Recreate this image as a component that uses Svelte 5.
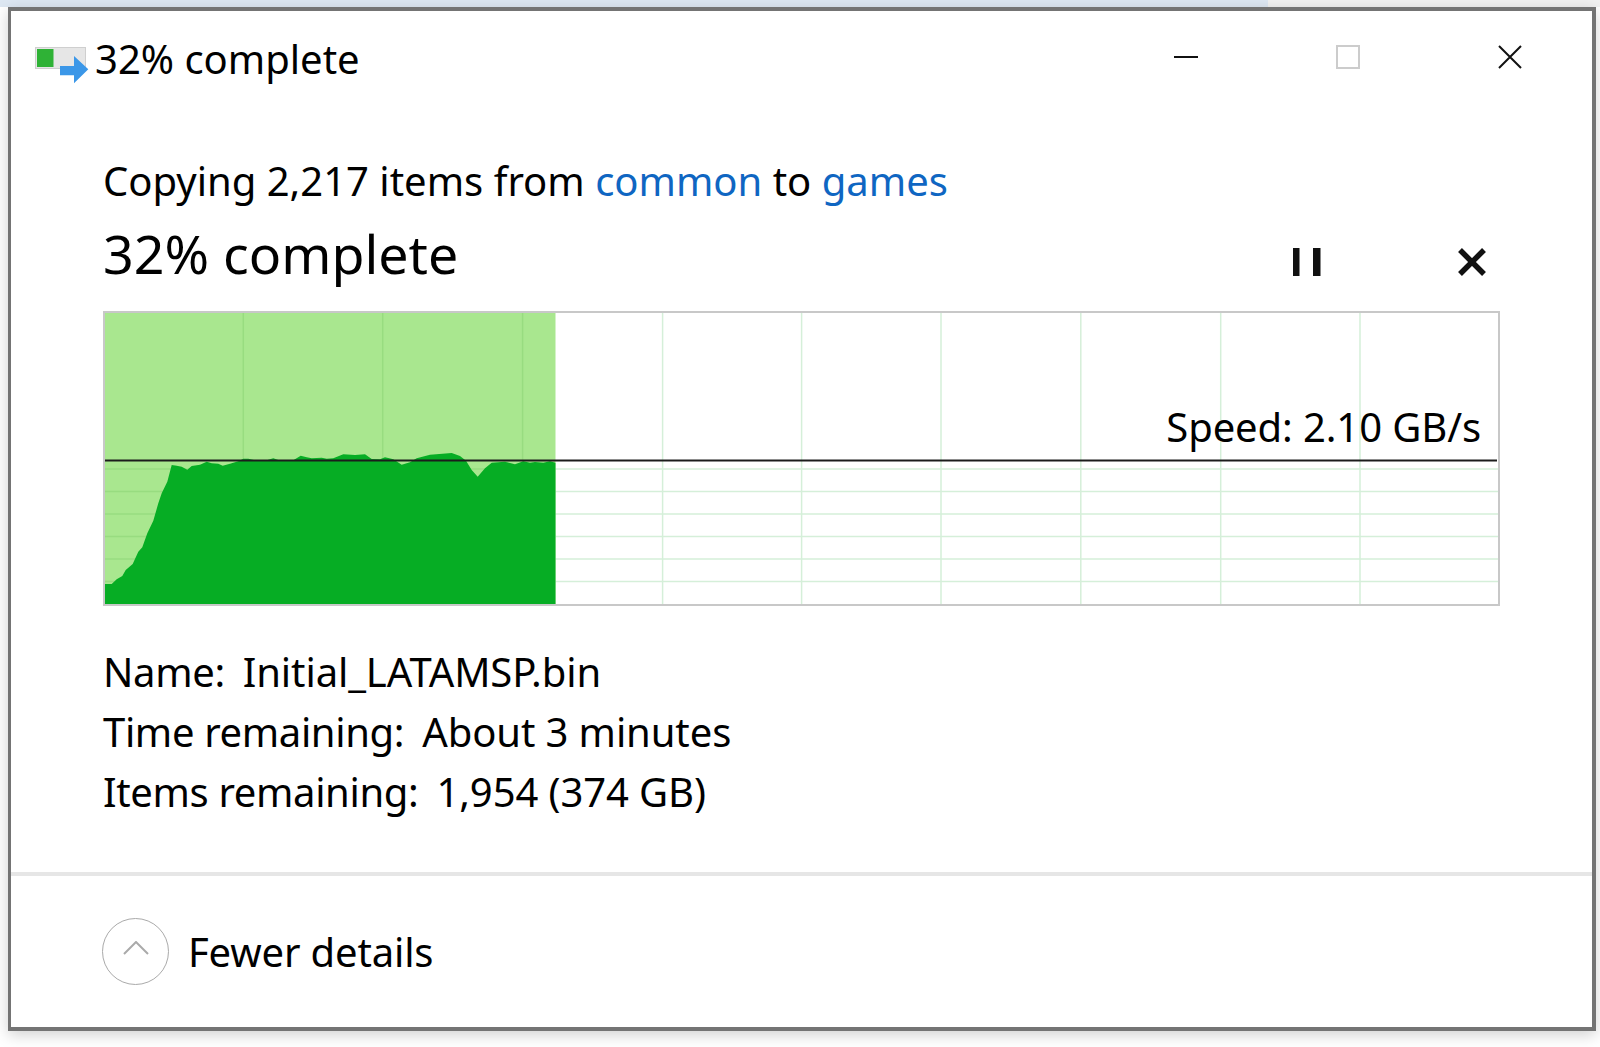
<script>
	const title = '32% complete';
	const gridX = [243.3, 382.7, 522.6, 662.6, 801.6, 941, 1080.8, 1220.7, 1360];
	const gridY = [469, 491.5, 514, 536.5, 559, 581.5];
	const left = 105;
	const top = 313;
	const doneX = 555.5;
	const bottomY = 604;

	// speed samples, page coordinates
	const samples = [
		[105, 584], [111.7, 584], [116.7, 579.3], [122.3, 576], [125.7, 570], [132.7, 564], [138.3, 551.7],
		[142.3, 547.3], [147.3, 533.3], [153.3, 520.7], [158.3, 503.3], [161.7, 493.3], [167.3, 481.7],
		[171.7, 465], [176.7, 465.7], [181.7, 466.7], [187.3, 469.7], [191.7, 466], [200, 464.7], [206.7, 461.7],
		[211.7, 463.3], [218.3, 463.7], [222.7, 465.7], [230, 463.7], [238.3, 461.3], [243.3, 458.7], [248.3, 458.7],
		[255, 460.3], [266.7, 460.3], [273.3, 458.3], [278.3, 460], [293.3, 460.3], [300.7, 455.7], [306.7, 457.3],
		[311.7, 458.3], [321.7, 457.7], [326.7, 458.7], [333.3, 458.3], [343.3, 454.3], [355, 455], [365, 454.3],
		[371.7, 459], [380, 459.3], [385, 457.3], [393.3, 459.3], [401.7, 464.7], [410, 462.3], [416.7, 458.3],
		[430, 454.7], [451.7, 453], [460, 456], [466, 460.7], [471.7, 470], [477.7, 476.7], [485, 468.3], [491.7, 462.7],
		[498.3, 462.3], [505, 461.7], [515, 464.3], [523.3, 461.3], [530, 462.7], [535, 462], [543.3, 462.7],
		[550, 461.3], [555.5, 462.7]
	];
	const area = [[left, bottomY], ...samples, [doneX, bottomY]]
		.map(([x, y]) => `${x - left},${y - top}`)
		.join(' ');

	const details = [
		{ label: 'Name:', value: 'Initial_LATAMSP.bin' },
		{ label: 'Time remaining:', value: 'About 3 minutes' },
		{ label: 'Items remaining:', value: '1,954 (374 GB)' }
	];
</script>

<div class="page">
	<div class="window">
		<header class="titlebar">
			<svg class="app-icon" width="56" height="40" viewBox="0 0 56 40">
				<rect x="0.5" y="0.5" width="50" height="21" fill="#e6e6e6" stroke="#cfcfcf" />
				<rect x="2" y="2" width="16.5" height="18" fill="#2fb236" />
				<polygon points="25,19 39,19 39,9 53.3,22.3 39,36.3 39,28.3 25,28.3" fill="#3b97e8" />
			</svg>
			<span class="window-title">{title}</span>
			<div class="window-controls">
				<button aria-label="Minimize">
					<svg width="24" height="24" viewBox="0 0 24 24"><path d="M0 12h24" stroke="#111" stroke-width="2" /></svg>
				</button>
				<button aria-label="Maximize">
					<svg width="24" height="24" viewBox="0 0 24 24"><rect x="1" y="1" width="22" height="22" fill="none" stroke="#ccc" stroke-width="2" /></svg>
				</button>
				<button aria-label="Close">
					<svg width="24" height="24" viewBox="0 0 24 24"><path d="M1 1l22 22M23 1L1 23" stroke="#111" stroke-width="2" /></svg>
				</button>
			</div>
		</header>

		<main class="content">
			<p class="summary">Copying 2,217 items from <a href="#common">common</a> to <a href="#games">games</a></p>
			<div class="progress-head">
				<h1>{title}</h1>
				<div class="actions">
					<button aria-label="Pause">
						<svg width="28" height="28" viewBox="0 0 28 28"><path d="M0 0h6.5v28H0zM20 0h7.5v28H20z" fill="#111" /></svg>
					</button>
					<button aria-label="Cancel">
						<svg width="28" height="28" viewBox="0 0 28 28"><path d="M2 2l24 24M26 2L2 26" stroke="#111" stroke-width="5.5" /></svg>
					</button>
				</div>
			</div>

			<div class="graph">
				<svg width="1393" height="291" viewBox="0 0 1393 291">
					<rect width={doneX - left} height="291" fill="#a9e78f" />
					{#each gridX as x}
						<path
							d={`M${x - left} 0V291`}
							stroke={x < doneX ? '#98dc80' : '#d5efd9'}
							stroke-width="1.5"
						/>
					{/each}
					{#each gridY as y}
						<path d={`M0 ${y - top}H${doneX - left}`} stroke="#98dc80" stroke-width="1.5" />
						<path d={`M${doneX - left} ${y - top}H1393`} stroke="#d5efd9" stroke-width="1.5" />
					{/each}
					<polygon points={area} fill="#06ad24" />
					<path d="M0 147.4H1392" stroke="#1c1c1c" stroke-width="2" />
				</svg>
				<span class="speed">Speed: 2.10 GB/s</span>
			</div>

			<dl class="details">
				{#each details as row}
					<div class="detail-row">
						<dt>{row.label}</dt>
						<dd>{row.value}</dd>
					</div>
				{/each}
			</dl>
		</main>

		<footer class="footer">
			<button class="toggle">
				<span class="toggle-circle">
					<svg width="26" height="14" viewBox="0 0 26 14"><path d="M1 13L13 1l12 12" fill="none" stroke="#aaa" stroke-width="2" /></svg>
				</span>
				<span class="toggle-label">Fewer details</span>
			</button>
		</footer>
	</div>
</div>

<style>
	:global(body) {
		margin: 0;
		background: #fff;
	}

	.page {
		height: 1047px;
		padding: 7px 4px 0 8px;
		box-sizing: border-box;
		background: linear-gradient(90deg, #dde7f2 1268px, #f1f1f1 1268px) top / 100% 7px no-repeat;
		font-family: 'Noto Sans', 'Open Sans', sans-serif;
		color: #000;
	}

	.window {
		height: 1024px;
		box-sizing: border-box;
		border: 4px solid #747474;
		border-left-width: 3px;
		background: #fff;
		box-shadow: 0 4px 14px rgba(0, 0, 0, 0.18);
		display: flex;
		flex-direction: column;
	}

	button {
		padding: 0;
		border: none;
		background: none;
		display: flex;
		font: inherit;
		color: inherit;
	}

	svg {
		display: block;
	}

	.titlebar {
		height: 88px;
		display: flex;
		align-items: center;
		padding-left: 24px;
		flex-shrink: 0;
	}

	.app-icon {
		margin-top: 24px;
		margin-right: 4px;
	}

	.window-title {
		font-size: 40px;
		line-height: 50px;
		margin-top: 8px;
	}

	.window-controls {
		margin-left: auto;
		margin-right: 70px;
		display: flex;
		gap: 138px;
		margin-top: 4px;
	}

	.content {
		padding: 0 92px;
		flex: 1;
	}

	.summary {
		margin: 56px 0 0;
		font-size: 40px;
		line-height: 52px;
	}

	a {
		color: #0f66c2;
		text-decoration: none;
	}

	.progress-head {
		display: flex;
		justify-content: space-between;
		align-items: center;
		height: 72px;
		margin-top: 11px;
		margin-bottom: 21px;
	}

	h1 {
		margin: 0;
		font-size: 53.7px;
		line-height: 72px;
		font-weight: 400;
	}

	.actions {
		display: flex;
		gap: 137px;
		margin-right: 14px;
		margin-top: 16px;
	}

	.graph {
		position: relative;
		box-sizing: border-box;
		width: 1397px;
		height: 295px;
		border: 2px solid #c8c8c8;
		overflow: hidden;
	}

	.speed {
		position: absolute;
		right: 17px;
		top: 88px;
		font-size: 40px;
		line-height: 52px;
		letter-spacing: -0.1px;
	}

	.details {
		margin: 35px 0 0;
	}

	.detail-row {
		display: flex;
		gap: 18px;
		height: 60px;
		align-items: center;
		font-size: 40px;
	}

	dt {
		margin: 0;
		letter-spacing: -0.35px;
	}

	dd {
		margin: 0;
		letter-spacing: -0.1px;
	}

	.footer {
		height: 155px;
		flex-shrink: 0;
		border-top: 4px solid #e6e6e6;
		padding: 42px 0 0 91px;
		box-sizing: border-box;
	}

	.toggle {
		align-items: center;
		gap: 19px;
	}

	.toggle-circle {
		width: 67px;
		height: 67px;
		box-sizing: border-box;
		border: 1.5px solid #aaa;
		border-radius: 50%;
		display: flex;
		align-items: center;
		justify-content: center;
		padding-bottom: 8px;
	}

	.toggle-label {
		font-size: 40px;
		line-height: 52px;
		letter-spacing: -0.15px;
	}
</style>
